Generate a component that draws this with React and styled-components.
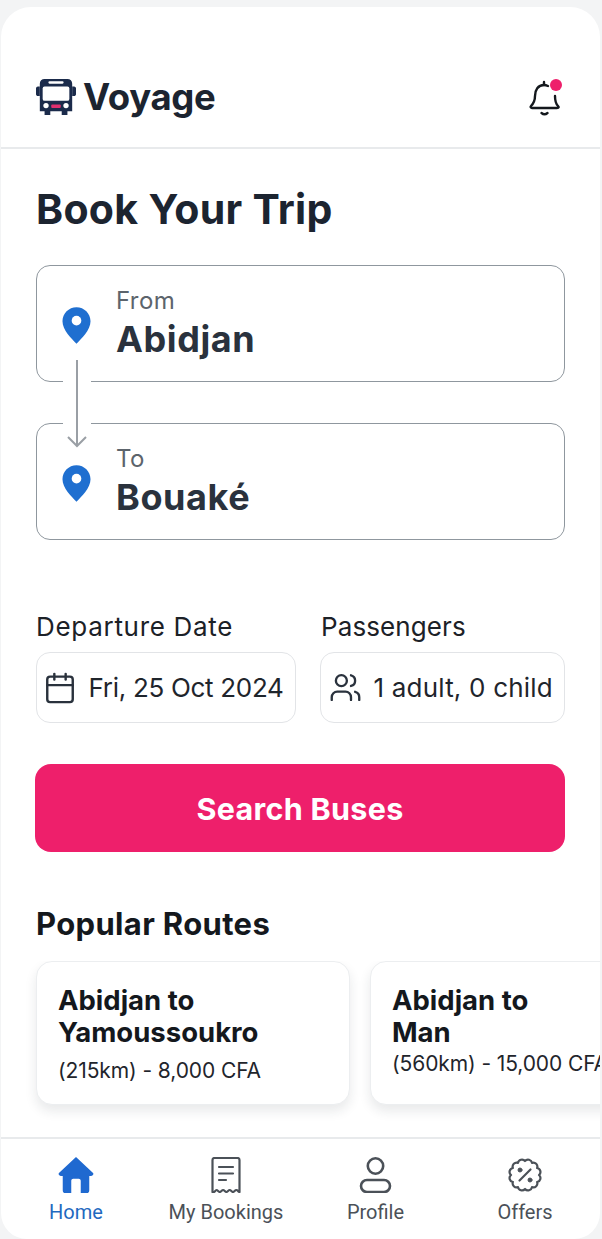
import React from 'react';
import styled, { createGlobalStyle } from 'styled-components';
import { Calendar, Users } from 'lucide-react';

const GlobalStyle = createGlobalStyle`
    html, body {
        margin: 0;
        background: #f3f4f5;
    }
    * {
        box-sizing: border-box;
    }
`;

const Page = styled.div`
    width: 602px;
    height: 1239px;
    padding: 7px 2px 0 1px;
    overflow: hidden;
    font-family: Inter, "Liberation Sans", sans-serif;
`;

const Phone = styled.div`
    height: 1232px;
    display: flex;
    flex-direction: column;
    background: #fff;
    border-radius: 30px 30px 26px 26px;
    overflow: hidden;
`;

const Header = styled.header`
    height: 142px;
    flex: none;
    display: flex;
    align-items: flex-end;
    justify-content: space-between;
    padding: 0 37px 28px 35px;
    border-bottom: 2px solid #e8eaec;
`;

const Brand = styled.div`
    display: flex;
    align-items: center;
    gap: 7px;
    font-size: 36.5px;
    font-weight: 700;
    letter-spacing: -0.3px;
    color: #1c2430;
`;

const Bell = styled.div`
    position: relative;
    width: 36px;
    height: 40px;
    margin-bottom: 2px;
`;

const Dot = styled.span`
    position: absolute;
    top: 2px;
    right: 1px;
    width: 12px;
    height: 12px;
    border-radius: 50%;
    background: #ee1f6b;
`;

const Main = styled.main`
    flex: 1;
    padding: 0 35px;
`;

const Title = styled.h1`
    margin: 36px 0 32px;
    font-size: 41px;
    line-height: 48px;
    font-weight: 700;
    letter-spacing: 0.3px;
    color: #1c2430;
`;

const Route = styled.div`
    position: relative;
    display: flex;
    flex-direction: column;
    gap: 41px;
`;

const Place = styled.div`
    height: 117px;
    display: flex;
    align-items: center;
    gap: 25px;
    padding: 3px 0 0 25px;
    border: 1.5px solid #8f979e;
    border-radius: 14px;
`;

const PlaceText = styled.div`
    display: flex;
    flex-direction: column;
`;

const PlaceLabel = styled.span`
    font-size: 24px;
    line-height: 28px;
    letter-spacing: 0.4px;
    color: #5c646c;
`;

const PlaceName = styled.span`
    font-size: 36px;
    line-height: 48px;
    font-weight: 700;
    letter-spacing: 0.6px;
    color: #2a323d;
`;

const Connector = styled.svg`
    position: absolute;
    left: 27px;
    top: 94px;
`;

const Fields = styled.div`
    display: grid;
    grid-template-columns: 260px 245px;
    gap: 24px;
    margin-top: 71px;
`;

const Field = styled.div`
    display: flex;
    flex-direction: column;
    gap: 9px;
`;

const FieldLabel = styled.label`
    font-size: 26px;
    line-height: 32px;
    letter-spacing: ${(p) => p.$spacing}px;
    padding-left: ${(p) => p.$indent}px;
    color: #1c2127;
`;

const FieldBox = styled.div`
    height: 71px;
    display: flex;
    align-items: center;
    gap: 11.5px;
    padding-left: ${(p) => p.$pad}px;
    border: 1.5px solid #e2e4e7;
    border-radius: 14px;
    font-size: 26px;
    letter-spacing: ${(p) => p.$spacing}px;
    white-space: nowrap;
    color: #1f252c;
    svg {
        flex: none;
        color: #2a323d;
    }
`;

const SearchButton = styled.button`
    display: block;
    width: 530px;
    height: 88px;
    margin: 41px 0 0 -1px;
    border: 0;
    border-radius: 16px;
    background: #ee1f6b;
    color: #fff;
    font: 700 30.5px Inter, "Liberation Sans", sans-serif;
    letter-spacing: 0.3px;
`;

const SectionTitle = styled.h2`
    margin: 54px 0 19px;
    font-size: 31px;
    line-height: 36px;
    font-weight: 700;
    letter-spacing: 0.35px;
    color: #14181d;
`;

const Scroller = styled.div`
    display: flex;
    gap: 20px;
    width: 580px;
    margin-left: -14px;
    padding: 0 0 20px 14px;
    overflow: hidden;
`;

const RouteCard = styled.article`
    width: 314px;
    height: 144px;
    flex: none;
    padding: 22px 21px 0;
    background: #fff;
    border: 1px solid #eceef0;
    border-radius: 16px;
    box-shadow: 0 6px 12px rgba(30, 40, 50, 0.1);
    white-space: nowrap;
`;

const RouteName = styled.div`
    font-size: 27.5px;
    line-height: 32px;
    font-weight: 700;
    color: #14181d;
`;

const RouteInfo = styled.div`
    margin-top: ${(p) => p.$offset}px;
    font-size: 21px;
    line-height: 30px;
    letter-spacing: -0.1px;
    color: #1f252c;
`;

const Nav = styled.nav`
    height: 102px;
    flex: none;
    display: grid;
    grid-template-columns: 150px 150px 149px 150px;
    padding-top: 18px;
    border-top: 2px solid #e8eaec;
`;

const NavItem = styled.div`
    display: flex;
    flex-direction: column;
    align-items: center;
    gap: 6px;
    font-family: Roboto, "Liberation Sans", sans-serif;
    font-size: 20px;
    line-height: 26px;
    color: ${(p) => (p.$active ? '#1f69c0' : '#4b5158')};
    svg {
        display: block;
    }
`;

const BusIcon = () => (
    <svg width="40" height="40" viewBox="0 0 42 42">
        <path fill="#1b2b4b" d="M9 2h24c3 0 5 2 5 5v29h-5v4h-6v-4H15v4H9v-4H4V7c0-3 2-5 5-5z" />
        <path fill="#1b2b4b" d="M0 12c0-1 1-2 2-2h2v10H2c-1 0-2-1-2-2zM42 12c0-1-1-2-2-2h-2v10h2c1 0 2-1 2-2z" />
        <rect x="7" y="10" width="28" height="15" rx="2" fill="#fff" />
        <rect x="13" y="4.500" width="16" height="2.500" rx="1.200" fill="#fff" />
        <circle cx="10.500" cy="30" r="2.800" fill="#fff" />
        <circle cx="31.500" cy="30" r="2.800" fill="#fff" />
        <rect x="16" y="29" width="10" height="3.500" rx="1" fill="#e0306f" />
    </svg>
);

const BellIcon = () => (
    <svg width="36" height="40" viewBox="0 0 36 40" fill="none" stroke="#14181d" strokeWidth="2.400" strokeLinecap="round" strokeLinejoin="round">
        <path d="M17 5v3" />
        <path d="M21 9c-1.500-.7-2.500-1-4-1-6 0-9 5-9 11 0 5-2 8-4 10-1 1 0 2 1 2h25c2 0 2-1 1-2-2-2-3-4-3-10" />
        <path d="M14.500 36c2 1.600 4 1.600 6 0" />
    </svg>
);

const PinIcon = () => (
    <svg width="29" height="37" viewBox="0 0 30 38">
        <path fill="#1f6fd0" d="M15 0C7 0 0.500 6.500 0.500 14.500 0.500 24 10 32 15 38c5-6 14.500-14 14.500-23.500C29.500 6.500 23 0 15 0z" />
        <circle cx="15" cy="14" r="5" fill="#fff" />
    </svg>
);

const HomeIcon = () => (
    <svg width="38" height="36" viewBox="0 0 38 38">
        <path fill="#1f69d0" d="M19 0 37 17c1 1 0 3-2 3h-2v15c0 2-1 3-3 3h-6V25c0-1-1-2-2-2h-6c-1 0-2 1-2 2v13H8c-2 0-3-1-3-3V20H3c-2 0-3-2-2-3z" />
    </svg>
);

const ReceiptIcon = () => (
    <svg width="30" height="36" viewBox="0 0 30 36" fill="none" stroke="#4b5158" strokeWidth="2.200" strokeLinecap="round" strokeLinejoin="round">
        <path d="M1.500 35V3c0-1 1-2 2-2h23c1 0 2 1 2 2v32c-1 0-1.800-2-3.200-2s-2 2-3.300 2-2-2-3.300-2-2 2-3.300 2-2-2-3.300-2-2 2-3.300 2-2.100-2-3.300-2-1.500 2-2.500 2z" />
        <path d="M8 10h14M8 16.500h14M8 23h7" />
    </svg>
);

const ProfileIcon = () => (
    <svg width="33" height="36" viewBox="0 0 33 36" fill="none" stroke="#4b5158" strokeWidth="2.600">
        <circle cx="16.500" cy="9" r="7.700" />
        <rect x="2" y="23" width="29" height="12" rx="6" />
    </svg>
);

// scalloped badge outline, twelve bumps round the centre
const badgePath = () => {
    const points = Array.from({ length: 12 }, (_, i) => {
        const angle = (i * Math.PI) / 6 - Math.PI / 2;
        return [18 + 14 * Math.cos(angle), 18 + 14 * Math.sin(angle)];
    });
    const [sx, sy] = points[0];
    const arcs = points.slice(1).concat([points[0]]).map(([x, y]) => `A4 4 0 0 1 ${x.toFixed(2)} ${y.toFixed(2)}`);
    return `M${sx.toFixed(2)} ${sy.toFixed(2)}${arcs.join('')}Z`;
};

const OffersIcon = () => (
    <svg width="36" height="36" viewBox="0 0 36 36" fill="none" stroke="#4b5158" strokeWidth="2.200" strokeLinecap="round">
        <path d={badgePath()} strokeLinejoin="round" />
        <path d="M23.500 12.500l-11 11" />
        <circle cx="13" cy="13" r="2" fill="#4b5158" strokeWidth="1" />
        <circle cx="23" cy="23" r="2" fill="#4b5158" strokeWidth="1" />
    </svg>
);

const navItems = [
    { label: 'Home', icon: <HomeIcon />, active: true },
    { label: 'My Bookings', icon: <ReceiptIcon /> },
    { label: 'Profile', icon: <ProfileIcon /> },
    { label: 'Offers', icon: <OffersIcon /> },
];

const routes = [
    { from: 'Abidjan to', to: 'Yamoussoukro', info: '(215km) - 8,000 CFA', offset: 8 },
    { from: 'Abidjan to', to: 'Man', info: '(560km) - 15,000 CFA', offset: 1 },
];

export default function App() {
    return (
        <Page>
            <GlobalStyle />
            <Phone>
                <Header>
                    <Brand>
                        <BusIcon />
                        Voyage
                    </Brand>
                    <Bell>
                        <BellIcon />
                        <Dot />
                    </Bell>
                </Header>
                <Main>
                    <Title>Book Your Trip</Title>
                    <Route>
                        <Place>
                            <PinIcon />
                            <PlaceText>
                                <PlaceLabel>From</PlaceLabel>
                                <PlaceName>Abidjan</PlaceName>
                            </PlaceText>
                        </Place>
                        <Place>
                            <PinIcon />
                            <PlaceText>
                                <PlaceLabel>To</PlaceLabel>
                                <PlaceName>Bouaké</PlaceName>
                            </PlaceText>
                        </Place>
                        <Connector width="28" height="90" viewBox="0 0 28 90" fill="none">
                            <path d="M0 22h28M0 64h28" stroke="#fff" strokeWidth="3" />
                            <path d="M14 1v86M5 78l9 9 9-9" stroke="#9a9fa5" strokeWidth="2" />
                        </Connector>
                    </Route>
                    <Fields>
                        <Field>
                            <FieldLabel $spacing={0.7} $indent={0}>Departure Date</FieldLabel>
                            <FieldBox $spacing={-0.3} $pad={6}>
                                <Calendar size={34} strokeWidth={1.7} />
                                Fri, 25 Oct 2024
                            </FieldBox>
                        </Field>
                        <Field>
                            <FieldLabel $spacing={0.1} $indent={1}>Passengers</FieldLabel>
                            <FieldBox $spacing={0.2} $pad={8}>
                                <Users size={33} strokeWidth={1.7} />
                                1 adult, 0 child
                            </FieldBox>
                        </Field>
                    </Fields>
                    <SearchButton>Search Buses</SearchButton>
                    <SectionTitle>Popular Routes</SectionTitle>
                    <Scroller>
                        {routes.map((item, i) => (
                            <RouteCard key={i}>
                                <RouteName>{item.from}</RouteName>
                                <RouteName>{item.to}</RouteName>
                                <RouteInfo $offset={item.offset}>{item.info}</RouteInfo>
                            </RouteCard>
                        ))}
                    </Scroller>
                </Main>
                <Nav>
                    {navItems.map((item) => (
                        <NavItem key={item.label} $active={item.active}>
                            {item.icon}
                            {item.label}
                        </NavItem>
                    ))}
                </Nav>
            </Phone>
        </Page>
    );
}
